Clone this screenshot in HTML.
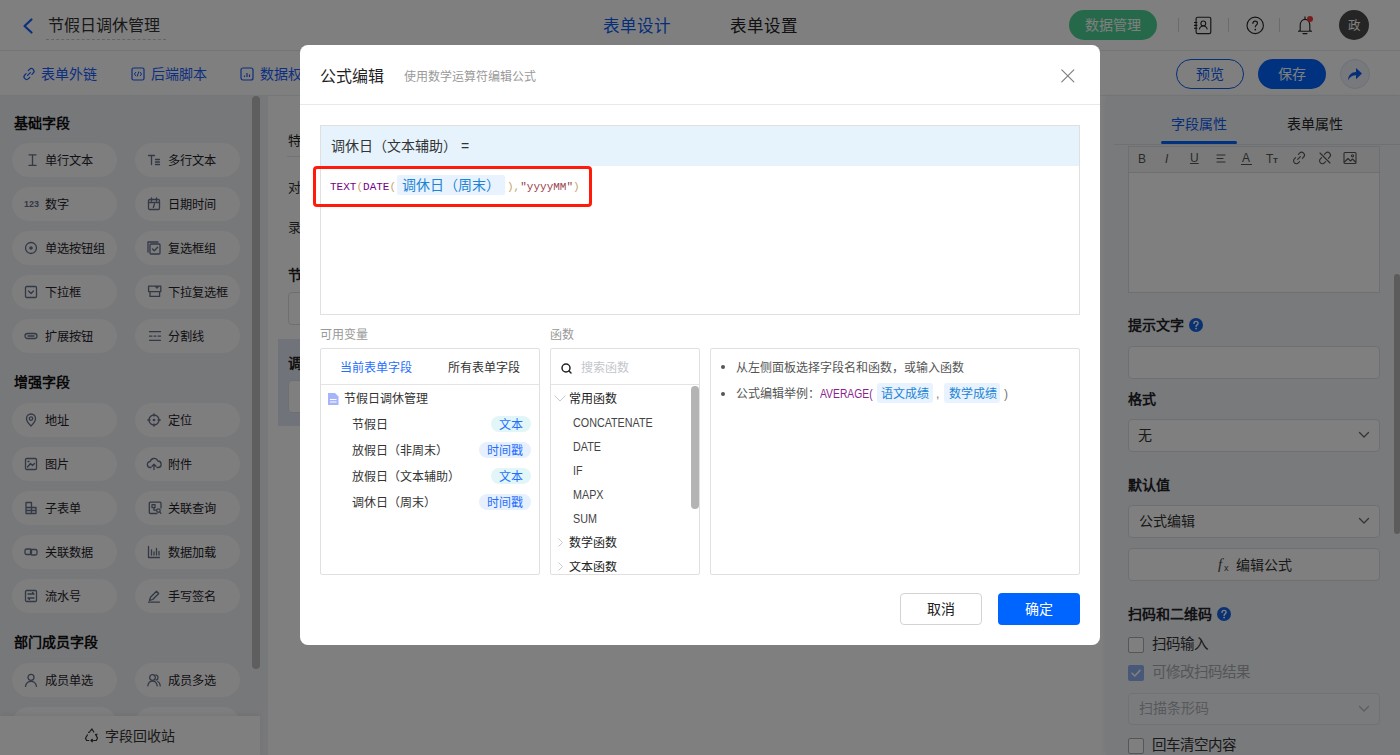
<!DOCTYPE html>
<html lang="zh-CN">
<head>
<meta charset="utf-8">
<style>
*{box-sizing:border-box;margin:0;padding:0}
html,body{width:1400px;height:755px;overflow:hidden}
body{position:relative;font-family:"Liberation Sans",sans-serif;color:#1f2329;background:#fff}
.a{position:absolute}
.t{position:absolute;white-space:nowrap;line-height:1}
svg{position:absolute;overflow:visible}
/* page */
#hdr{left:0;top:0;width:1400px;height:51px;background:#fff;border-bottom:1px solid #e8e9eb}
#tb{left:0;top:51px;width:1400px;height:45px;background:#fff;border-bottom:1px solid #eceef1}
#side{left:0;top:96px;width:268px;height:659px;background:#eff0f5}
.pill{position:absolute;width:105px;height:34px;border-radius:17px;background:#fcfcfe}
.pill span{position:absolute;left:33px;top:11px;font-size:12.2px;line-height:14px;color:#1f2329;white-space:nowrap}
.pill svg{left:12px;top:10px}
.sh{position:absolute;left:14px;font-size:14px;font-weight:bold;line-height:14px;color:#111}
#canvas{left:268px;top:96px;width:838px;height:659px;background:#fff}
#rp{left:1106px;top:96px;width:294px;height:659px;background:#f3f4f7;box-shadow:-2px 0 6px rgba(0,0,0,.06)}
#ov{left:0;top:0;width:1400px;height:755px;background:rgba(0,0,0,.5)}
/* modal */
#modal{left:300px;top:45px;width:800px;height:600px;background:#fff;border-radius:8px}
</style>
</head>
<body>
<!-- ===== PAGE ===== -->
<div id="hdr" class="a"></div>
  <svg style="left:22px;top:18px" width="14" height="16" viewBox="0 0 14 16"><path d="M9.5 1.5 L2.5 8 L9.5 14.5" fill="none" stroke="#1a5eff" stroke-width="2.2" stroke-linecap="round" stroke-linejoin="round"/></svg>
  <div class="t" style="left:48px;top:18px;font-size:16px;color:#333">节假日调休管理</div>
  <div class="a" style="left:46px;top:39px;width:120px;border-top:1px dashed #c9cbd0"></div>
  <div class="t" style="left:603px;top:18px;font-size:16.5px;color:#0b5cf5">表单设计</div>
  <div class="t" style="left:730px;top:18px;font-size:16.5px;color:#222">表单设置</div>
  <div class="a" style="left:1069px;top:10px;width:88px;height:30px;border-radius:15px;background:#4cd295"></div>
  <div class="t" style="left:1085px;top:18px;font-size:14px;color:#fff">数据管理</div>
  <div class="a" style="left:1178px;top:18px;width:1px;height:14px;background:#d5d6d9"></div>
  <svg style="left:1193px;top:16px" width="20" height="20" viewBox="0 0 20 20"><rect x="3.1" y="1.2" width="14.7" height="16.4" rx="1.6" fill="none" stroke="#2a2a2a" stroke-width="1.15"/><circle cx="10.3" cy="7.4" r="2.4" fill="none" stroke="#2a2a2a" stroke-width="1.1"/><path d="M6.3 13.4c.5-2.3 2-3.4 4-3.4s3.5 1.1 4 3.4" fill="none" stroke="#2a2a2a" stroke-width="1.1"/><path d="M1 6.5h3.4M1 9.4h3.4M1 12.3h3.4" stroke="#222" stroke-width="1.1"/></svg>
  <div class="a" style="left:1228px;top:18px;width:1px;height:14px;background:#d5d6d9"></div>
  <svg style="left:1244px;top:15px" width="20" height="20" viewBox="0 0 20 20"><circle cx="11.2" cy="10.4" r="8.2" fill="none" stroke="#2a2a2a" stroke-width="1.15"/><path d="M8.9 8.5c0-1.4 1-2.4 2.3-2.4 1.3 0 2.3.9 2.3 2.1 0 1.7-2.2 1.8-2.2 3.6" fill="none" stroke="#2a2a2a" stroke-width="1.15" stroke-linecap="round"/><circle cx="11.3" cy="14.6" r=".85" fill="#222"/></svg>
  <div class="a" style="left:1279px;top:18px;width:1px;height:14px;background:#d5d6d9"></div>
  <svg style="left:1296px;top:15px" width="18" height="20" viewBox="0 0 18 20"><path d="M4.2 15.6V10.2C4.2 6.9 6.3 4.3 9 4.3s4.8 2.6 4.8 5.9v5.4l1.7.6H2.5z" fill="none" stroke="#2a2a2a" stroke-width="1.15" stroke-linejoin="round"/><path d="M7 18.6h4M9 1.8v2.2" stroke="#2a2a2a" stroke-width="1.15" stroke-linecap="round"/><circle cx="14" cy="3.9" r="3" fill="#f03b3b"/></svg>
  <div class="a" style="left:1339px;top:10px;width:30px;height:30px;border-radius:15px;background:#4a4a4a"></div>
  <div class="t" style="left:1348px;top:19.5px;font-size:12.5px;font-family:'Liberation Serif',serif;color:#fff">政</div>
<div id="tb" class="a"></div>
  <svg style="left:22px;top:67px" width="14" height="14" viewBox="0 0 14 14"><path d="M5.6 8.4 8.4 5.6M6.2 3.6l1.3-1.3a2.6 2.6 0 0 1 3.7 3.7L9.9 7.3M7.8 10.4l-1.3 1.3a2.6 2.6 0 0 1-3.7-3.7l1.3-1.3" fill="none" stroke="#1a5eff" stroke-width="1.2" stroke-linecap="round"/></svg>
  <div class="t" style="left:41px;top:67px;font-size:14px;color:#1a5eff">表单外链</div>
  <svg style="left:131px;top:67px" width="14" height="14" viewBox="0 0 14 14"><rect x="1" y="1" width="12" height="12" rx="1.5" fill="none" stroke="#1a5eff" stroke-width="1.2"/><path d="M5 5 3.4 7 5 9M9 5l1.6 2L9 9M7.8 4.5 6.2 9.5" fill="none" stroke="#1a5eff" stroke-width="1"/></svg>
  <div class="t" style="left:151px;top:67px;font-size:14px;color:#1a5eff">后端脚本</div>
  <svg style="left:240px;top:67px" width="14" height="14" viewBox="0 0 14 14"><rect x="1" y="1" width="12" height="12" rx="2" fill="none" stroke="#1a5eff" stroke-width="1.2"/><path d="M4.5 8.5v1.5M7 6v4M9.5 7.5v2.5" stroke="#1a5eff" stroke-width="1.2"/></svg>
  <div class="t" style="left:260px;top:67px;font-size:14px;color:#1a5eff">数据权限</div>
  <div class="a" style="left:1176px;top:59px;width:68px;height:30px;border-radius:15px;border:1px solid #0a5cf0;background:#fff"></div>
  <div class="t" style="left:1196px;top:67px;font-size:14px;color:#0b5cf5">预览</div>
  <div class="a" style="left:1258px;top:59px;width:68px;height:30px;border-radius:15px;background:#0064ff"></div>
  <div class="t" style="left:1278px;top:67px;font-size:14px;color:#fff">保存</div>
  <div class="a" style="left:1340px;top:59px;width:30px;height:30px;border-radius:15px;border:1px solid #d9e2f5;background:#eef2fa"></div>
  <svg style="left:1347px;top:67px" width="16" height="14" viewBox="0 0 16 14"><path d="M1 13.2C1.4 8 4.5 5 9 5V1l6 5.6-6 5.6V8.2c-3.6 0-6 1.4-8 5z" fill="#0b5cf5"/></svg>
<div id="side" class="a"></div>
<div class="sh" style="top:116px">基础字段</div>
<div class="sh" style="top:375px">增强字段</div>
<div class="sh" style="top:635px">部门成员字段</div>
<div class="pill" style="left:12px;top:143px"><svg width="14" height="14" viewBox="0 0 14 14"><path d="M5 1.8h7M8.5 1.8v10.6M5 12.4h7" fill="none" stroke="#66708a" stroke-width="1.3" stroke-linecap="round" stroke-linejoin="round"/></svg><span>单行文本</span></div>
<div class="pill" style="left:135px;top:143px"><svg width="14" height="14" viewBox="0 0 14 14"><path d="M1.5 2.5h6M4.5 2.5v9M8.5 6.5h4M8.5 9h4M8.5 11.5h4" fill="none" stroke="#66708a" stroke-width="1.3" stroke-linecap="round" stroke-linejoin="round"/></svg><span>多行文本</span></div>
<div class="pill" style="left:12px;top:187px"><svg width="14" height="14" viewBox="0 0 14 14"><text x="0" y="10" font-size="9" font-weight="bold" font-family="Liberation Sans" fill="#66708a">123</text></svg><span>数字</span></div>
<div class="pill" style="left:135px;top:187px"><svg width="14" height="14" viewBox="0 0 14 14"><rect x="1.5" y="2.5" width="11" height="10" rx="1.2" fill="none" stroke="#66708a" stroke-width="1.3" stroke-linecap="round" stroke-linejoin="round"/><path d="M1.5 5.5h11M4.5 1v3M9.5 1v3M7.5 7l-1.2 3.5" fill="none" stroke="#66708a" stroke-width="1.3" stroke-linecap="round" stroke-linejoin="round"/></svg><span>日期时间</span></div>
<div class="pill" style="left:12px;top:231px"><svg width="14" height="14" viewBox="0 0 14 14"><circle cx="7" cy="7" r="5.5" fill="none" stroke="#66708a" stroke-width="1.3" stroke-linecap="round" stroke-linejoin="round"/><circle cx="7" cy="7" r="1.8" fill="#66708a"/></svg><span>单选按钮组</span></div>
<div class="pill" style="left:135px;top:231px"><svg width="14" height="14" viewBox="0 0 14 14"><rect x="3" y="3" width="10" height="10" rx="1" fill="none" stroke="#66708a" stroke-width="1.3" stroke-linecap="round" stroke-linejoin="round"/><path d="M1 11V1h10M5.5 8l1.8 1.8 3.3-3.6" fill="none" stroke="#66708a" stroke-width="1.3" stroke-linecap="round" stroke-linejoin="round"/></svg><span>复选框组</span></div>
<div class="pill" style="left:12px;top:275px"><svg width="14" height="14" viewBox="0 0 14 14"><rect x="1.5" y="1.5" width="11" height="11" rx="1.2" fill="none" stroke="#66708a" stroke-width="1.3" stroke-linecap="round" stroke-linejoin="round"/><path d="M4.5 6l2.5 2.5L9.5 6" fill="none" stroke="#66708a" stroke-width="1.3" stroke-linecap="round" stroke-linejoin="round"/></svg><span>下拉框</span></div>
<div class="pill" style="left:135px;top:275px"><svg width="14" height="14" viewBox="0 0 14 14"><path d="M1.6 1.2h12.2v5.4H1.6zM3 6.6h9.6v4.8H3z" fill="none" stroke="#66708a" stroke-width="1.3" stroke-linecap="round" stroke-linejoin="round"/><path d="M8.6 1.5l1.4 1.6 1.4-1.6" fill="none" stroke="#66708a" stroke-width="1.3" stroke-linecap="round" stroke-linejoin="round"/></svg><span>下拉复选框</span></div>
<div class="pill" style="left:12px;top:319px"><svg width="14" height="14" viewBox="0 0 14 14"><rect x="1" y="4.5" width="12" height="5" rx="2.5" fill="none" stroke="#66708a" stroke-width="1.3" stroke-linecap="round" stroke-linejoin="round"/><path d="M4 7h6" fill="none" stroke="#66708a" stroke-width="1.3" stroke-linecap="round" stroke-linejoin="round"/></svg><span>扩展按钮</span></div>
<div class="pill" style="left:135px;top:319px"><svg width="14" height="14" viewBox="0 0 14 14"><path d="M2.5 2.7h11M2.5 11.3h11" fill="none" stroke="#66708a" stroke-width="1.3" stroke-linecap="round" stroke-linejoin="round"/><path d="M2.5 7.1h2.4M7 7.1h2M11.1 7.1h2.4" fill="none" stroke="#66708a" stroke-width="1.3" stroke-linecap="round" stroke-linejoin="round"/></svg><span>分割线</span></div>
<div class="pill" style="left:12px;top:403px"><svg width="14" height="14" viewBox="0 0 14 14"><path d="M7 13s4.5-4.3 4.5-7.5A4.5 4.5 0 0 0 2.5 5.5C2.5 8.7 7 13 7 13z" fill="none" stroke="#66708a" stroke-width="1.3" stroke-linecap="round" stroke-linejoin="round"/><circle cx="7" cy="5.6" r="1.7" fill="none" stroke="#66708a" stroke-width="1.3" stroke-linecap="round" stroke-linejoin="round"/></svg><span>地址</span></div>
<div class="pill" style="left:135px;top:403px"><svg width="14" height="14" viewBox="0 0 14 14"><circle cx="7" cy="7" r="5" fill="none" stroke="#66708a" stroke-width="1.3" stroke-linecap="round" stroke-linejoin="round"/><circle cx="7" cy="7" r="1.3" fill="#66708a"/><path d="M7 0.8v2.2M7 11v2.2M0.8 7h2.2M11 7h2.2" fill="none" stroke="#66708a" stroke-width="1.3" stroke-linecap="round" stroke-linejoin="round"/></svg><span>定位</span></div>
<div class="pill" style="left:12px;top:447px"><svg width="14" height="14" viewBox="0 0 14 14"><rect x="1.5" y="1.5" width="11" height="11" rx="1.2" fill="none" stroke="#66708a" stroke-width="1.3" stroke-linecap="round" stroke-linejoin="round"/><path d="M3.5 10l3-3.5 2 2 2-2M4 4.5h1" fill="none" stroke="#66708a" stroke-width="1.3" stroke-linecap="round" stroke-linejoin="round"/></svg><span>图片</span></div>
<div class="pill" style="left:135px;top:447px"><svg width="14" height="14" viewBox="0 0 14 14"><path d="M4 10.5H3.5a3 3 0 0 1-.3-6A4 4 0 0 1 10.8 4a3.2 3.2 0 0 1 .2 6.5H10M7 12.5v-5M5 9.3l2-2 2 2" fill="none" stroke="#66708a" stroke-width="1.3" stroke-linecap="round" stroke-linejoin="round"/></svg><span>附件</span></div>
<div class="pill" style="left:12px;top:491px"><svg width="14" height="14" viewBox="0 0 14 14"><path d="M2 1.5h5.5v5H12v6H2zM2 6.5h5.5M2 9.5h10M7.5 6.5v6" fill="none" stroke="#66708a" stroke-width="1.3" stroke-linecap="round" stroke-linejoin="round"/></svg><span>子表单</span></div>
<div class="pill" style="left:135px;top:491px"><svg width="14" height="14" viewBox="0 0 14 14"><path d="M10 12.5H3.3a1 1 0 0 1-1-1V2.2a1 1 0 0 1 1-1H13a1 1 0 0 1 1 1V7" fill="none" stroke="#66708a" stroke-width="1.3" stroke-linecap="round" stroke-linejoin="round"/><path d="M5 3.6h3v3H5zM7 6.6v2.6h2.2" fill="none" stroke="#66708a" stroke-width="1.3" stroke-linecap="round" stroke-linejoin="round"/><circle cx="11.4" cy="9.6" r="1.8" fill="none" stroke="#66708a" stroke-width="1.3" stroke-linecap="round" stroke-linejoin="round"/><path d="M12.7 10.9l1.2 1.4" fill="none" stroke="#66708a" stroke-width="1.3" stroke-linecap="round" stroke-linejoin="round"/></svg><span>关联查询</span></div>
<div class="pill" style="left:12px;top:535px"><svg width="14" height="14" viewBox="0 0 14 14"><rect x="1" y="4" width="6.5" height="5.5" rx="1.5" fill="none" stroke="#66708a" stroke-width="1.3" stroke-linecap="round" stroke-linejoin="round"/><rect x="6.5" y="4.5" width="6.5" height="5.5" rx="1.5" fill="none" stroke="#66708a" stroke-width="1.3" stroke-linecap="round" stroke-linejoin="round"/></svg><span>关联数据</span></div>
<div class="pill" style="left:135px;top:535px"><svg width="14" height="14" viewBox="0 0 14 14"><path d="M1.5 1.5v11h11M4.5 10V5M7 10V7M9.5 10V3.5M12 10V6.5" fill="none" stroke="#66708a" stroke-width="1.3" stroke-linecap="round" stroke-linejoin="round"/></svg><span>数据加载</span></div>
<div class="pill" style="left:12px;top:579px"><svg width="14" height="14" viewBox="0 0 14 14"><rect x="1.5" y="1.5" width="11" height="11" rx="1.2" fill="none" stroke="#66708a" stroke-width="1.3" stroke-linecap="round" stroke-linejoin="round"/><path d="M4 5h6l-1.5-1.5M10 9H4l1.5 1.5" fill="none" stroke="#66708a" stroke-width="1.3" stroke-linecap="round" stroke-linejoin="round"/></svg><span>流水号</span></div>
<div class="pill" style="left:135px;top:579px"><svg width="14" height="14" viewBox="0 0 14 14"><path d="M2.5 11.5l1-3.2 6-6 2.2 2.2-6 6zM1.5 13.2h11" fill="none" stroke="#66708a" stroke-width="1.3" stroke-linecap="round" stroke-linejoin="round"/></svg><span>手写签名</span></div>
<div class="pill" style="left:12px;top:663px"><svg width="14" height="14" viewBox="0 0 14 14"><circle cx="7" cy="4.3" r="3" fill="none" stroke="#66708a" stroke-width="1.3" stroke-linecap="round" stroke-linejoin="round"/><path d="M1.5 13.3c.6-3.2 2.7-5 5.5-5s4.9 1.8 5.5 5" fill="none" stroke="#66708a" stroke-width="1.3" stroke-linecap="round" stroke-linejoin="round"/></svg><span>成员单选</span></div>
<div class="pill" style="left:135px;top:663px"><svg width="14" height="14" viewBox="0 0 14 14"><circle cx="5.5" cy="4.5" r="2.8" fill="none" stroke="#66708a" stroke-width="1.3" stroke-linecap="round" stroke-linejoin="round"/><path d="M0.8 12.8c.5-3 2.3-4.6 4.7-4.6s4.2 1.6 4.7 4.6M9 1.8a2.8 2.8 0 0 1 0 5.4M10.8 8.5c1.4.6 2.2 2.1 2.5 4.3" fill="none" stroke="#66708a" stroke-width="1.3" stroke-linecap="round" stroke-linejoin="round"/></svg><span>成员多选</span></div>
<div class="pill" style="left:12px;top:707px"><svg width="14" height="14" viewBox="0 0 14 14"><circle cx="7" cy="4.3" r="3" fill="none" stroke="#66708a" stroke-width="1.3" stroke-linecap="round" stroke-linejoin="round"/><path d="M1.5 13.3c.6-3.2 2.7-5 5.5-5s4.9 1.8 5.5 5" fill="none" stroke="#66708a" stroke-width="1.3" stroke-linecap="round" stroke-linejoin="round"/></svg><span>部门单选</span></div>
<div class="pill" style="left:135px;top:707px"><svg width="14" height="14" viewBox="0 0 14 14"><circle cx="5.5" cy="4.5" r="2.8" fill="none" stroke="#66708a" stroke-width="1.3" stroke-linecap="round" stroke-linejoin="round"/><path d="M0.8 12.8c.5-3 2.3-4.6 4.7-4.6s4.2 1.6 4.7 4.6M9 1.8a2.8 2.8 0 0 1 0 5.4M10.8 8.5c1.4.6 2.2 2.1 2.5 4.3" fill="none" stroke="#66708a" stroke-width="1.3" stroke-linecap="round" stroke-linejoin="round"/></svg><span>部门多选</span></div>
<div class="a" style="left:252px;top:96px;width:8px;height:573px;border-radius:4px;background:#bcbcbc"></div>
<div class="a" style="left:0;top:716px;width:260px;height:39px;background:#fff;box-shadow:0 -2px 5px rgba(0,0,0,.06)"></div>
<svg style="left:84px;top:728px" width="16" height="16" viewBox="0 0 16 16"><path d="M6.2 3.2 8 1l1.8 3M11.5 6.5l2 3.5-1.2 2.5H9.5M4.8 12.5H2.6l-1.1-2.3 2-3.4M5.6 4.2l-1 .2M13 6.2l-.6.9M7 12.5l1.3-1.2v2.4z" fill="none" stroke="#333" stroke-width="1.2" stroke-linecap="round" stroke-linejoin="round"/></svg>
<div class="t" style="left:105px;top:729px;font-size:14px;color:#333">字段回收站</div>
<div id="canvas" class="a"></div>
<div class="t" style="left:288px;top:134px;font-size:13px;color:#222">特别说明</div>
<div class="a" style="left:287px;top:156px;width:400px;height:1px;background:#e6e6e6"></div>
<div class="t" style="left:288px;top:180.5px;font-size:13px;color:#333">对于节假日调休</div>
<div class="t" style="left:288px;top:221px;font-size:13px;color:#333">录入说明</div>
<div class="t" style="left:288px;top:268px;font-size:14px;font-weight:bold;color:#222">节假日</div>
<div class="a" style="left:288px;top:292px;width:400px;height:33px;border:1px solid #dcdfe4;border-radius:4px;background:#fff"></div>
<div class="a" style="left:278px;top:339px;width:820px;height:87px;background:#e1e7f3"></div>
<div class="t" style="left:288px;top:356px;font-size:14px;font-weight:bold;color:#222">调休日</div>
<div class="a" style="left:288px;top:380px;width:400px;height:33px;border:1px solid #dcdfe4;border-radius:4px;background:#fff"></div>
<div id="rp" class="a"></div>
<div class="t" style="left:1171px;top:117px;font-size:14px;color:#0b5cf5">字段属性</div>
<div class="a" style="left:1161px;top:141px;width:76px;height:3px;border-radius:1.5px;background:#0064ff"></div>
<div class="t" style="left:1287px;top:117px;font-size:14px;color:#222">表单属性</div>
<div class="a" style="left:1114px;top:144px;width:286px;height:1px;background:#dfe1e5"></div>
<div class="a" style="left:1128px;top:146px;width:252px;height:147px;border:1px solid #dcdfe4;background:#fff"></div>
<div class="a" style="left:1129px;top:147px;width:250px;height:26px;background:#f4f5f7;border-bottom:1px solid #dcdfe4"></div>
<div class="t" style="left:1138px;top:153px;font-size:12px;color:#555">B</div>
<div class="t" style="left:1165px;top:153px;font-size:12px;font-style:italic;color:#555">I</div>
<div class="t" style="left:1190px;top:152px;font-size:12px;text-decoration:underline;color:#555">U</div>
<svg style="left:1216px;top:154px" width="10" height="10" viewBox="0 0 10 10"><path d="M1 1h8M1 4.5h6M1 8h8" stroke="#555" fill="none" stroke-width="1.1" stroke-linecap="round" stroke-linejoin="round"/></svg>
<div class="t" style="left:1242px;top:152px;font-size:12px;color:#555">A</div><div class="a" style="left:1241px;top:164px;width:11px;height:1px;background:#555"></div>
<div class="t" style="left:1266px;top:153px;font-size:12px;color:#555">T</div><div class="t" style="left:1273px;top:157px;font-size:8px;font-weight:bold;color:#555">T</div>
<svg style="left:1292px;top:151px" width="14" height="14" viewBox="0 0 14 14"><path d="M5.6 8.4 8.4 5.6M6.4 3.4l1.2-1.2a2.8 2.8 0 0 1 4 4L10.4 7.4M7.6 10.6l-1.2 1.2a2.8 2.8 0 0 1-4-4L3.6 6.6" stroke="#555" fill="none" stroke-width="1.1" stroke-linecap="round" stroke-linejoin="round"/></svg>
<svg style="left:1318px;top:151px" width="14" height="14" viewBox="0 0 14 14"><path d="M6.4 3.4l1.2-1.2a2.8 2.8 0 0 1 4 4L10.4 7.4M7.6 10.6l-1.2 1.2a2.8 2.8 0 0 1-4-4L3.6 6.6M2 2l10 10" stroke="#555" fill="none" stroke-width="1.1" stroke-linecap="round" stroke-linejoin="round"/></svg>
<svg style="left:1343px;top:151px" width="14" height="14" viewBox="0 0 14 14"><rect x="1" y="1.5" width="12" height="11" rx="1" stroke="#555" fill="none" stroke-width="1.1" stroke-linecap="round" stroke-linejoin="round"/><path d="M1.5 11 5 7.5l2.5 2.5 2-2 3 3" stroke="#555" fill="none" stroke-width="1.1" stroke-linecap="round" stroke-linejoin="round"/><circle cx="9.5" cy="4.8" r="1.1" stroke="#555" fill="none" stroke-width="1.1" stroke-linecap="round" stroke-linejoin="round"/></svg>
<div class="t" style="left:1128px;top:318px;font-size:14px;font-weight:bold;color:#1f2329">提示文字</div>
<svg style="left:1189px;top:318px" width="14" height="14" viewBox="0 0 14 14"><circle cx="7" cy="7" r="7" fill="#1565e6"/><path d="M5 5.4c0-1.2.9-2 2.1-2s2 .8 2 1.9c0 1.5-2 1.6-2 3.2" fill="none" stroke="#fff" stroke-width="1.4" stroke-linecap="round"/><circle cx="7.1" cy="10.6" r=".9" fill="#fff"/></svg>
<div class="a" style="left:1128px;top:346px;width:252px;height:33px;border:1px solid #dcdfe4;border-radius:4px;background:#fff"></div>
<div class="t" style="left:1128px;top:392px;font-size:14px;font-weight:bold;color:#1f2329">格式</div>
<div class="a" style="left:1128px;top:419px;width:252px;height:33px;border:1px solid #dcdfe4;border-radius:4px;background:#fff"></div>
<div class="t" style="left:1138px;top:428px;font-size:14px;color:#333">无</div>
<svg style="left:1358px;top:431px" width="12" height="8" viewBox="0 0 12 8"><path d="M1.5 1.5 6 6l4.5-4.5" fill="none" stroke="#666" stroke-width="1.3" stroke-linecap="round" stroke-linejoin="round"/></svg>
<div class="t" style="left:1128px;top:478px;font-size:14px;font-weight:bold;color:#1f2329">默认值</div>
<div class="a" style="left:1128px;top:505px;width:252px;height:33px;border:1px solid #dcdfe4;border-radius:4px;background:#fff"></div>
<div class="t" style="left:1139px;top:514px;font-size:14px;color:#333">公式编辑</div>
<svg style="left:1358px;top:517px" width="12" height="8" viewBox="0 0 12 8"><path d="M1.5 1.5 6 6l4.5-4.5" fill="none" stroke="#666" stroke-width="1.3" stroke-linecap="round" stroke-linejoin="round"/></svg>
<div class="a" style="left:1128px;top:548px;width:252px;height:33px;border:1px solid #dcdfe4;border-radius:4px;background:#fff"></div>
<div class="t" style="left:1218px;top:557px;font-size:15px;font-style:italic;font-family:'Liberation Serif',serif;color:#444">f</div><div class="t" style="left:1224px;top:564px;font-size:9px;color:#444">x</div>
<div class="t" style="left:1236px;top:558px;font-size:14px;color:#333">编辑公式</div>
<div class="t" style="left:1128px;top:607px;font-size:14px;font-weight:bold;color:#1f2329">扫码和二维码</div>
<svg style="left:1217px;top:607px" width="14" height="14" viewBox="0 0 14 14"><circle cx="7" cy="7" r="7" fill="#1565e6"/><path d="M5 5.4c0-1.2.9-2 2.1-2s2 .8 2 1.9c0 1.5-2 1.6-2 3.2" fill="none" stroke="#fff" stroke-width="1.4" stroke-linecap="round"/><circle cx="7.1" cy="10.6" r=".9" fill="#fff"/></svg>
<div class="a" style="left:1128px;top:637px;width:16px;height:16px;border:1px solid #a9adb5;border-radius:2px;background:#fff"></div>
<div class="t" style="left:1152px;top:637px;font-size:14.5px;color:#333">扫码输入</div>
<div class="a" style="left:1128px;top:665px;width:16px;height:16px;border-radius:2px;background:#8fb1f2"></div>
<svg style="left:1130px;top:667px" width="12" height="12" viewBox="0 0 12 12"><path d="M2 6.2 4.8 9 10 3.4" fill="none" stroke="#fff" stroke-width="1.6" stroke-linecap="round" stroke-linejoin="round"/></svg>
<div class="t" style="left:1152px;top:665px;font-size:14.5px;color:#a8abb2">可修改扫码结果</div>
<div class="a" style="left:1128px;top:693px;width:252px;height:32px;border:1px solid #e2e4e8;border-radius:4px;background:#f5f6f8"></div>
<div class="t" style="left:1139px;top:701px;font-size:14px;color:#b0b3b9">扫描条形码</div>
<svg style="left:1358px;top:705px" width="12" height="8" viewBox="0 0 12 8"><path d="M1.5 1.5 6 6l4.5-4.5" fill="none" stroke="#bbb" stroke-width="1.3" stroke-linecap="round" stroke-linejoin="round"/></svg>
<div class="a" style="left:1128px;top:738px;width:16px;height:16px;border:1px solid #a9adb5;border-radius:2px;background:#fff"></div>
<div class="t" style="left:1152px;top:738px;font-size:14.5px;color:#333">回车清空内容</div>
<div class="a" style="left:1394px;top:274px;width:6px;height:260px;border-radius:3px;background:#b8b8b8"></div>

<!-- overlay -->
<div id="ov" class="a"></div>

<!-- ===== MODAL ===== -->
<div id="modal" class="a"></div>
<div class="t" style="left:320px;top:69px;font-size:16px;color:#1f1f1f">公式编辑</div>
<div class="t" style="left:404px;top:71px;font-size:12px;color:#9a9a9a">使用数学运算符编辑公式</div>
<svg style="left:1061px;top:68.5px" width="14" height="14" viewBox="0 0 14 14"><path d="M.8.8l12 12M12.8.8l-12 12" stroke="#808080" stroke-width="1.2" stroke-linecap="round"/></svg>
<div class="a" style="left:300px;top:104px;width:800px;height:1px;background:#e9e9e9"></div>
<div class="a" style="left:320px;top:125px;width:760px;height:190px;border:1px solid #e0e0e0;background:#fff"></div>
<div class="a" style="left:321px;top:126px;width:758px;height:40px;background:#e6f3fd"></div>
<div class="t" style="left:331px;top:139px;font-size:14px;color:#333">调休日（文本辅助） =</div>
<div class="t" style="left:330px;top:180.5px;font-family:'Liberation Mono',monospace;font-size:11.5px;transform:scaleX(.957);transform-origin:0 0;color:#770088">TEXT<span style="color:#c9a36a">(</span>DATE<span style="color:#c9a36a">(</span></div>
<div class="a" style="left:397px;top:175px;width:108px;height:20px;border-radius:2px;background:#e8f3ff"></div>
<div class="t" style="left:402px;top:178px;font-size:14px;color:#1d84d4">调休日（周末）</div>
<div class="t" style="left:507px;top:180.5px;font-family:'Liberation Mono',monospace;font-size:11.5px;transform:scaleX(.957);transform-origin:0 0;color:#c9a36a">),<span style="color:#9a3f4a">"yyyyMM"</span>)</div>
<div class="a" style="left:313px;top:166px;width:279px;height:41px;border:3px solid #ff1a0a;border-radius:4px"></div>
<div class="t" style="left:320px;top:329px;font-size:12px;color:#999">可用变量</div>
<div class="t" style="left:550px;top:329px;font-size:12px;color:#999">函数</div>
<div class="a" style="left:320px;top:348px;width:220px;height:227px;border:1px solid #e0e0e0;border-radius:2px;background:#fff"></div>
<div class="a" style="left:321px;top:384px;width:218px;height:1px;background:#e4e4e4"></div>
<div class="t" style="left:340px;top:362px;font-size:12px;color:#1f6fff">当前表单字段</div>
<div class="t" style="left:448px;top:362px;font-size:12px;color:#333">所有表单字段</div>
<svg style="left:328px;top:393px" width="11" height="12" viewBox="0 0 11 12"><path d="M0 0h7l3.5 3.5V12H0z" fill="#a6b4fa"/><path d="M2 6.5h6.5M2 9h6.5" stroke="#fff" stroke-width="1"/></svg>
<div class="t" style="left:344px;top:393px;font-size:12px;color:#333">节假日调休管理</div>
<div class="t" style="left:352px;top:419px;font-size:12px;color:#333">节假日</div>
<div class="a" style="left:491px;top:416px;width:40px;height:16px;border-radius:8px;background:#e3f6f7"></div>
<div class="t" style="left:499px;top:419px;font-size:12px;color:#1f6fff">文本</div>
<div class="t" style="left:352px;top:445px;font-size:12px;color:#333">放假日（非周末）</div>
<div class="a" style="left:479px;top:442px;width:52px;height:16px;border-radius:8px;background:#e7f0fd"></div>
<div class="t" style="left:487px;top:445px;font-size:12px;color:#1f6fff">时间戳</div>
<div class="t" style="left:352px;top:471px;font-size:12px;color:#333">放假日（文本辅助）</div>
<div class="a" style="left:491px;top:468px;width:40px;height:16px;border-radius:8px;background:#e3f6f7"></div>
<div class="t" style="left:499px;top:471px;font-size:12px;color:#1f6fff">文本</div>
<div class="t" style="left:352px;top:497px;font-size:12px;color:#333">调休日（周末）</div>
<div class="a" style="left:479px;top:494px;width:52px;height:16px;border-radius:8px;background:#e7f0fd"></div>
<div class="t" style="left:487px;top:497px;font-size:12px;color:#1f6fff">时间戳</div>
<div class="a" style="left:550px;top:348px;width:150px;height:227px;border:1px solid #e0e0e0;border-radius:2px;background:#fff"></div>
<div class="a" style="left:551px;top:384px;width:148px;height:1px;background:#e4e4e4"></div>
<svg style="left:561px;top:363px" width="12" height="11" viewBox="0 0 12 11"><circle cx="5" cy="5" r="4" fill="none" stroke="#222" stroke-width="1.5"/><path d="M8 8l2 2" stroke="#222" stroke-width="1.5" stroke-linecap="round"/></svg>
<div class="t" style="left:581px;top:362px;font-size:12px;color:#c3c6cc">搜索函数</div>
<svg style="left:554px;top:395px" width="12" height="7" viewBox="0 0 12 7"><path d="M.5.5 6 6 11.5.5" fill="none" stroke="#c5c9d0" stroke-width="1"/></svg>
<div class="t" style="left:569px;top:393px;font-size:12px;color:#222">常用函数</div>
<div class="t" style="left:573px;top:417px;font-size:12.5px;color:#444;transform:scaleX(.86);transform-origin:0 0">CONCATENATE</div>
<div class="t" style="left:573px;top:441px;font-size:12.5px;color:#444;transform:scaleX(.86);transform-origin:0 0">DATE</div>
<div class="t" style="left:573px;top:465px;font-size:12.5px;color:#444;transform:scaleX(.86);transform-origin:0 0">IF</div>
<div class="t" style="left:573px;top:489px;font-size:12.5px;color:#444;transform:scaleX(.86);transform-origin:0 0">MAPX</div>
<div class="t" style="left:573px;top:513px;font-size:12.5px;color:#444;transform:scaleX(.86);transform-origin:0 0">SUM</div>
<svg style="left:558px;top:538px" width="5" height="9" viewBox="0 0 5 9"><path d="M.5.5 4.5 4.5.5 8.5" fill="none" stroke="#c5c9d0" stroke-width="1"/></svg>
<div class="t" style="left:569px;top:537px;font-size:12px;color:#222">数学函数</div>
<svg style="left:558px;top:562px" width="5" height="9" viewBox="0 0 5 9"><path d="M.5.5 4.5 4.5.5 8.5" fill="none" stroke="#c5c9d0" stroke-width="1"/></svg>
<div class="t" style="left:569px;top:561px;font-size:12px;color:#222;height:14px;overflow:hidden">文本函数</div>
<div class="a" style="left:691px;top:386px;width:8px;height:123px;border-radius:4px;background:#b4b4b4"></div>
<div class="a" style="left:710px;top:348px;width:370px;height:227px;border:1px solid #e0e0e0;border-radius:2px;background:#fff"></div>
<div class="a" style="left:721px;top:365px;width:4px;height:4px;border-radius:2px;background:#555"></div>
<div class="t" style="left:736px;top:362px;font-size:12px;color:#555">从左侧面板选择字段名和函数，或输入函数</div>
<div class="a" style="left:721px;top:392px;width:4px;height:4px;border-radius:2px;background:#555"></div>
<div class="t" style="left:736px;top:388px;font-size:12px;color:#555">公式编辑举例：<span style="color:#8b1f8f;display:inline-block;transform:scaleX(.86);transform-origin:0 0">AVERAGE(</span></div>
<div class="a" style="left:877px;top:383px;width:56px;height:20px;border-radius:3px;background:#e8f3ff"></div>
<div class="t" style="left:881px;top:388px;font-size:12px;color:#1d84d4">语文成绩</div>
<div class="t" style="left:936px;top:388px;font-size:12px;color:#777">,</div>
<div class="a" style="left:944px;top:383px;width:56px;height:20px;border-radius:3px;background:#e8f3ff"></div>
<div class="t" style="left:949px;top:388px;font-size:12px;color:#1d84d4">数学成绩</div>
<div class="t" style="left:1004px;top:388px;font-size:12px;color:#777">)</div>
<div class="a" style="left:900px;top:593px;width:82px;height:32px;border:1px solid #d3d3d3;border-radius:4px;background:#fff"></div>
<div class="t" style="left:927px;top:602px;font-size:14px;color:#222">取消</div>
<div class="a" style="left:998px;top:593px;width:82px;height:32px;border-radius:4px;background:#0064ff"></div>
<div class="t" style="left:1025px;top:602px;font-size:14px;color:#fff">确定</div>
</body>
</html>
